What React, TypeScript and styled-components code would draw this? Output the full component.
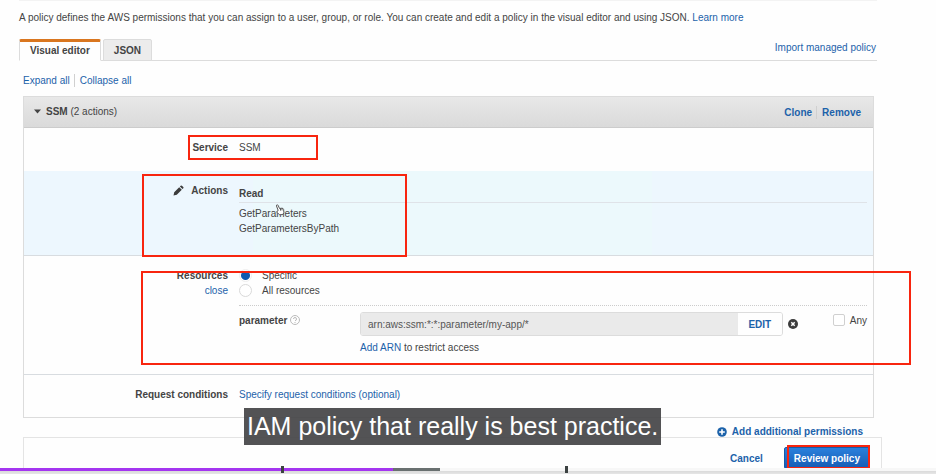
import React from "react";
import styled, { createGlobalStyle } from "styled-components";

const BLUE = "#1c62aa";
const LINE = "#dcdcdc";
const RED = "#f8250f";

const GlobalStyle = createGlobalStyle`
  * { box-sizing: border-box; }
  body {
    margin: 0;
    background: #fefefe;
    color: #444;
    font: 10px/15px "Liberation Sans", Arial, sans-serif;
    overflow: hidden;
  }
`;

const Page = styled.div`
  position: relative;
  height: 100vh;
  overflow: hidden;
`;

const Content = styled.main`
  margin: 0 59px 0 19px;
  border-top: 1px solid #f3f3f3;
`;

const Intro = styled.p`
  margin: 0;
  padding: 9px 0 14px;
`;

const Link = styled.a<{ $bold?: boolean }>`
  color: ${BLUE};
  font-weight: ${(p) => (p.$bold ? 700 : 400)};
  text-decoration: none;
`;

const TabBar = styled.div`
  display: flex;
  align-items: flex-end;
  gap: 2px;
  height: 22px;
  border-bottom: 1px solid ${LINE};
`;

const Tab = styled.button<{ $active?: boolean }>`
  height: 22px;
  margin-bottom: -1px;
  padding: ${(p) => (p.$active ? "0 10px 2px" : "0 10px")};
  border: 1px solid ${LINE};
  border-top: ${(p) => (p.$active ? "3px solid #d9761f" : `1px solid ${LINE}`)};
  border-bottom-color: ${(p) => (p.$active ? "#fefefe" : LINE)};
  border-radius: 2px 2px 0 0;
  background: ${(p) => (p.$active ? "#fefefe" : "#ececec")};
  color: #444;
  font: inherit;
  font-weight: 700;
`;

const ImportLink = styled(Link)`
  align-self: flex-start;
  margin: 1px 1px 0 auto;
`;

const LinkGroup = styled.div`
  display: flex;
  align-items: center;
  line-height: 13px;

  a + a {
    margin-left: 4px;
    padding-left: 5px;
    border-left: 1px solid #d0d0d0;
  }
`;

const ExpandLinks = styled(LinkGroup)`
  padding: 13px 4px 9px;
`;

const Panel = styled.section`
  margin: 0 3px 0 4px;
  border: 1px solid ${LINE};
`;

const PanelHeader = styled.header`
  display: flex;
  align-items: center;
  justify-content: space-between;
  height: 31px;
  padding: 0 12px 0 10px;
  border-bottom: 1px solid #ccc;
  background: linear-gradient(#e8e8e8, #dadada);
`;

const Toggle = styled.button`
  display: flex;
  align-items: center;
  gap: 5px;
  padding: 0 0 1px;
  border: 0;
  background: none;
  color: #444;
  font: inherit;
`;

const Row = styled.div<{ $pad: string; $tint?: boolean; $line?: boolean }>`
  position: relative;
  display: grid;
  grid-template-columns: 204px minmax(0, 1fr);
  column-gap: 11px;
  padding: ${(p) => p.$pad};
  background: ${(p) =>
    p.$tint ? "linear-gradient(90deg, #edf7fe 27%, #ecf9fc 27%, #ecf9fc 74%, #edf7fe 74%)" : "none"};
  border-bottom: ${(p) => (p.$line ? "1px solid #d8dce0" : "0")};
`;

const RowLabel = styled.div`
  display: flex;
  flex-direction: column;
  align-items: flex-end;
  font-weight: 700;
`;

const IconLabel = styled.div`
  display: flex;
  align-items: center;
  gap: 7px;
`;

const GroupTitle = styled.div`
  padding: 3px 0 1px;
  margin-bottom: 3px;
  border-bottom: 1px solid #dfe3e8;
  font-weight: 700;
`;

const RadioLabel = styled.label`
  display: flex;
  align-items: center;
  gap: 10px;
`;

const Radio = styled.input`
  appearance: none;
  width: 13px;
  height: 13px;
  margin: 0;
  border: 1px solid #d9d9d9;
  border-radius: 50%;
  background: #fff;

  &:checked {
    border-color: #eee;
    background: radial-gradient(circle, #115bb0 4px, #fff 5px);
  }
`;

const ParameterRow = styled.div`
  display: grid;
  grid-template-columns: 116px minmax(0, 1fr) auto;
  column-gap: 5px;
  margin-top: 7px;
  padding-top: 6px;
  border-top: 1px dotted #ccc;
`;

const ParameterName = styled.div`
  display: flex;
  align-items: center;
  gap: 3px;
  height: 16px;
  font-weight: 700;
`;

const ArnLine = styled.div`
  display: flex;
  align-items: center;
  gap: 5px;
  margin-bottom: 4px;
`;

const ArnField = styled.div`
  display: flex;
  flex: 1;
  height: 24px;
  border: 1px solid ${LINE};
  border-radius: 3px;
  overflow: hidden;
`;

const ArnInput = styled.input`
  flex: 1;
  min-width: 0;
  padding: 0 7px;
  border: 0;
  background: #eaeaea;
  color: #555;
  font: inherit;
`;

const EditButton = styled.button`
  width: 44px;
  padding: 0;
  border: 0;
  background: #fefefe;
  color: ${BLUE};
  font: inherit;
  font-weight: 700;
`;

const IconButton = styled.button`
  display: flex;
  padding: 0;
  border: 0;
  background: none;
`;

const AnyLabel = styled.label`
  display: flex;
  align-items: center;
  gap: 5px;
  height: 16px;
  margin-left: 30px;
`;

const Checkbox = styled.input`
  appearance: none;
  width: 12px;
  height: 12px;
  margin: 0;
  border: 1px solid #d0d0d0;
  border-radius: 2px;
  background: #fff;
`;

const AddPermissions = styled.div`
  display: flex;
  justify-content: flex-end;
  padding: 9px 14px 0 0;
  line-height: 10px;
`;

const AddButton = styled.button`
  display: flex;
  align-items: center;
  gap: 5px;
  padding: 0;
  border: 0;
  background: none;
  color: ${BLUE};
  font: inherit;
  font-weight: 700;
`;

const Footer = styled.footer`
  display: flex;
  justify-content: flex-end;
  align-items: flex-start;
  gap: 21px;
  height: 60px;
  margin: 0 54px 0 23px;
  padding: 9px 11px 0;
  border: 1px solid #e4e4e4;
`;

const CancelButton = styled.button`
  height: 22px;
  padding: 0;
  border: 0;
  background: none;
  color: ${BLUE};
  font: inherit;
  font-weight: 700;
`;

const ReviewButton = styled.button`
  position: relative;
  height: 22px;
  padding: 0 9px;
  border: 1px solid #1a5aa8;
  border-radius: 2px;
  background: linear-gradient(#2a80dc, #175cb4);
  color: #fff;
  font: inherit;
  font-weight: 700;
`;

const Highlight = styled.div<{ $inset: string; $width?: string }>`
  position: absolute;
  z-index: 1;
  inset: ${(p) => p.$inset};
  width: ${(p) => p.$width ?? "auto"};
  border: 2px solid ${RED};
  pointer-events: none;
`;

const Cursor = styled.svg`
  position: absolute;
  top: 33px;
  left: 251px;
`;

const Caption = styled.div`
  position: absolute;
  z-index: 2;
  bottom: 29px;
  left: 244px;
  padding: 0 3px;
  background: rgba(64, 64, 66, 0.9);
  color: #fff;
  font-size: 25px;
  line-height: 37px;
  white-space: nowrap;
`;

const Player = styled.div`
  position: absolute;
  z-index: 3;
  right: 0;
  bottom: 0;
  left: 0;
  height: 6px;
  background: linear-gradient(#f7f7f7 3px, #dadada 3px, #e6e6e6);
`;

const Progress = styled.div<{ $width: string; $color: string }>`
  position: absolute;
  top: 0;
  left: 0;
  width: ${(p) => p.$width};
  height: 3px;
  background: ${(p) => p.$color};
`;

const Chapter = styled.div<{ $left: string }>`
  position: absolute;
  top: -2px;
  left: ${(p) => p.$left};
  width: 3px;
  height: 7px;
  background: #3c4242;
`;

export default function App() {
  return (
    <Page>
      <GlobalStyle />
      <Content>
        <Intro>
          A policy defines the AWS permissions that you can assign to a user, group, or role. You can create and edit a
          policy in the visual editor and using JSON. <Link href="#learn">Learn more</Link>
        </Intro>
        <TabBar>
          <Tab $active>Visual editor</Tab>
          <Tab>JSON</Tab>
          <ImportLink href="#import">Import managed policy</ImportLink>
        </TabBar>
        <ExpandLinks>
          <Link href="#expand">Expand all</Link>
          <Link href="#collapse">Collapse all</Link>
        </ExpandLinks>
        <Panel>
          <PanelHeader>
            <Toggle aria-expanded="true">
              <svg width="7" height="5" viewBox="0 0 7 5" aria-hidden="true">
                <path d="M0 .5h7L3.500 4.500z" fill="#444" />
              </svg>
              <span>
                <b>SSM</b> (2 actions)
              </span>
            </Toggle>
            <LinkGroup>
              <Link $bold href="#clone">Clone</Link>
              <Link $bold href="#remove">Remove</Link>
            </LinkGroup>
          </PanelHeader>

          <Row $pad="12px 6px 16px 0">
            <RowLabel>Service</RowLabel>
            <div>SSM</div>
            <Highlight $inset="7px auto 11px 164px" $width="130px" />
          </Row>

          <Row $pad="12px 6px 19px 0" $tint $line>
            <RowLabel>
              <IconLabel>
                <svg width="11" height="11" viewBox="0 0 11 11" aria-hidden="true">
                  <path d="M.5 10.500 1.200 7.200 6.200 2.200 8.800 4.800 3.800 9.800zM6.900 1.500 7.700.700q.6-.5 1.200 0l1.400 1.400q.5.6 0 1.200L9.500 4.100z" fill="#3c3c3c" />
                </svg>
                Actions
              </IconLabel>
            </RowLabel>
            <div>
              <GroupTitle>Read</GroupTitle>
              <div>GetParameters</div>
              <div>GetParametersByPath</div>
            </div>
            <Highlight $inset="3px auto -2px 118px" $width="265px" />
            <Cursor width="10" height="12" viewBox="0 0 10 12" aria-hidden="true">
              <path
                d="M3.200 6.500 1.500 2q-.2-1 .5-1.200T3.200 1.500L4.500 4.500l2.500-.3q1.300 0 1.600 1.200l.3 3-1 2.100-3.400.300L2 8.300Q1.500 7 3.200 6.500zM5.500 4.600v2M7 4.600v1.800"
                fill="#fff"
                stroke="#555"
              />
            </Cursor>
          </Row>

          <Row $pad="12px 6px 19px 0" $line>
            <RowLabel>
              Resources
              <Link href="#close">close</Link>
            </RowLabel>
            <div>
              <RadioLabel>
                <Radio type="radio" name="resources" defaultChecked />
                Specific
              </RadioLabel>
              <RadioLabel>
                <Radio type="radio" name="resources" />
                All resources
              </RadioLabel>
              <ParameterRow>
                <ParameterName>
                  <label htmlFor="arn">parameter</label>
                  <svg width="10" height="10" viewBox="0 0 10 10" fill="none" stroke="#bbb" aria-hidden="true">
                    <circle cx="5" cy="5" r="4.500" />
                    <path d="M3.500 4q0-1.500 1.500-1.500T6.500 4 5 5.800M5 7v1" />
                  </svg>
                </ParameterName>
                <div>
                  <ArnLine>
                    <ArnField>
                      <ArnInput id="arn" readOnly defaultValue="arn:aws:ssm:*:*:parameter/my-app/*" />
                      <EditButton>EDIT</EditButton>
                    </ArnField>
                    <IconButton aria-label="Remove ARN">
                      <svg width="10" height="10" viewBox="0 0 10 10" aria-hidden="true">
                        <circle cx="5" cy="5" r="5" fill="#3c3c3c" />
                        <path d="m3.300 3.300 3.400 3.400m0-3.400L3.300 6.700" stroke="#fff" strokeWidth="1.500" />
                      </svg>
                    </IconButton>
                  </ArnLine>
                  <Link href="#arn">Add ARN</Link> to restrict access
                </div>
                <AnyLabel>
                  <Checkbox type="checkbox" />
                  Any
                </AnyLabel>
              </ParameterRow>
            </div>
            <Highlight $inset="15px -38px 9px 117px" />
          </Row>

          <Row $pad="12px 6px 15px 0">
            <RowLabel>Request conditions</RowLabel>
            <Link href="#conditions">Specify request conditions (optional)</Link>
          </Row>
        </Panel>
        <AddPermissions>
          <AddButton>
            <svg width="10" height="10" viewBox="0 0 10 10" aria-hidden="true">
              <circle cx="5" cy="5" r="4.800" fill={BLUE} />
              <path d="M5 2.200v5.600M2.200 5h5.600" stroke="#fff" strokeWidth="1.600" />
            </svg>
            Add additional permissions
          </AddButton>
        </AddPermissions>
      </Content>
      <Footer>
        <CancelButton>Cancel</CancelButton>
        <ReviewButton>
          Review policy
          <Highlight as="span" $inset="-3px -1px -1px 2px" />
        </ReviewButton>
      </Footer>
      <Caption>IAM policy that really is best practice.</Caption>
      <Player>
        <Progress $width="47%" $color="#697070" />
        <Progress $width="42%" $color="#a435f0" />
        <Chapter $left="30%" />
        <Chapter $left="60.400%" />
      </Player>
    </Page>
  );
}
